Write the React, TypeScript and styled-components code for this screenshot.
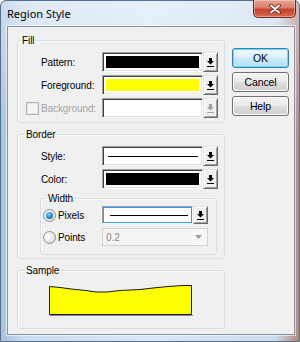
import React from 'react'
import styled, { createGlobalStyle, css } from 'styled-components'

// (1) Global
const GlobalStyle = createGlobalStyle`
  html, body { margin: 0; padding: 0; background: #fff; }
  body { font-family: "Liberation Sans", Arial, sans-serif; }
`

// (2) Frame
const Window = styled.div`
  width: 300px;
  height: 342px;
  box-sizing: border-box;
  padding: 0 4px 6px 6px;
  display: flex;
  flex-direction: column;
  border: 1px solid #56708c;
  border-radius: 6px 6px 0 0;
  background: linear-gradient(180deg, rgba(255, 255, 255, 0.4) 0%, rgba(255, 255, 255, 0) 40%),
    linear-gradient(90deg, #a9c2dc 0%, #cadcf0 8%, #d8e8f7 50%, #cadcef 92%, #b58a7c 100%);
`

const TitleBar = styled.div`
  height: 25px;
  flex-shrink: 0;
  display: flex;
  align-items: flex-start;
  justify-content: space-between;
`

const Title = styled.span`
  font-family: "Noto Sans", "Open Sans", sans-serif;
  font-size: 11px;
  line-height: 13px;
  margin-top: 6px;
  color: #000;
`

const CloseButton = styled.div`
  width: 43px;
  height: 18px;
  margin: -1px -1px 0 0;
  box-sizing: border-box;
  display: flex;
  align-items: center;
  justify-content: center;
  border: 1px solid #6b2a22;
  border-top: none;
  border-radius: 0 0 5px 5px;
  background: linear-gradient(180deg, #e8a495 0%, #dc7d6c 45%, #c6412e 55%, #d66a4f 100%);
  box-shadow: inset 0 0 0 1px rgba(255, 255, 255, 0.35);
`

const Client = styled.div`
  flex: 1;
  min-height: 0;
  overflow: hidden;
  display: flex;
  align-items: flex-start;
  gap: 7px;
  padding: 7px 5px 0 9px;
  background: #f0f0f0;
  border: 1px solid #8193a8;
  box-shadow: 0 0 0 1px rgba(255, 255, 255, 0.6);
  font-size: 10px;
  letter-spacing: -0.1px;
`

// (3) Groups
const LeftColumn = styled.div`
  width: 208px;
  display: flex;
  flex-direction: column;
  gap: 5px;
`

const Group = styled.fieldset<{ $pb: number; $pt?: number }>`
  margin: 0;
  min-width: 0;
  padding: ${(p) => p.$pt ?? 5}px 0 ${(p) => p.$pb}px 0;
  border: 1px solid #d5dfe5;
  border-radius: 3px;
  box-shadow: inset 1px 1px 0 #fcfcfc;
  display: flex;
  flex-direction: column;
  gap: 3px;
`

const SubGroup = styled(Group)`
  margin: 0 7px 0 22px;
  gap: 4px;
`

const Legend = styled.legend<{ $ml: number }>`
  font-size: 10px;
  line-height: 13px;
  padding: 0 1px;
  margin-left: ${(p) => p.$ml}px;
  color: #000;
`

const Row = styled.div<{ $lead: number; $label: number }>`
  display: grid;
  grid-template-columns: ${(p) => p.$lead}px ${(p) => p.$label}px auto;
  align-items: center;
`

const Lead = styled.div`
  justify-self: end;
  margin-right: 2px;
  display: flex;
`

const Label = styled.span<{ $disabled?: boolean }>`
  font-size: 10px;
  line-height: 13px;
  white-space: nowrap;
  color: ${(p) => (p.$disabled ? '#a3a3a3' : '#000')};
`

// (4) Controls
const Combo = styled.div`
  display: flex;
`

const Field = styled.div<{ $w: number; $h: number; $focus?: boolean }>`
  width: ${(p) => p.$w}px;
  height: ${(p) => p.$h}px;
  box-sizing: border-box;
  padding: 2px 3px 2px 2px;
  display: flex;
  align-items: center;
  background: #fff;
  border: 1px solid;
  border-color: #a0a0a0 #fff #fff #a0a0a0;
  ${(p) =>
    p.$focus
      ? css`
          box-shadow: inset 0 0 0 1px #3399ff;
          padding: 2px 3px 2px 4px;
        `
      : css`
          box-shadow: inset 1px 1px 0 #404040, inset -1px -1px 0 #e3e3e3;
        `}
`

const Swatch = styled.div<{ $color: string }>`
  flex: 1;
  height: 12px;
  margin-left: 1px;
  background: ${(p) => p.$color};
`

const LineSample = styled.div`
  flex: 1;
  height: 1px;
  margin: 1px 1px 0 3px;
  background: #000;
`

const DropButton = styled.div<{ $w: number; $h: number }>`
  width: ${(p) => p.$w}px;
  height: ${(p) => p.$h}px;
  box-sizing: border-box;
  display: flex;
  align-items: center;
  justify-content: center;
  background: #f0f0f0;
  border: 1px solid;
  border-color: #e3e3e3 #696969 #696969 #e3e3e3;
  box-shadow: inset 1px 1px 0 #fff, inset -1px -1px 0 #a0a0a0;
`

const DisabledCombo = styled.div`
  width: 106px;
  height: 18px;
  box-sizing: border-box;
  display: flex;
  align-items: center;
  justify-content: space-between;
  padding: 0 5px 0 3px;
  border: 1px solid #d3d3d3;
  background: linear-gradient(90deg, #f4f4f4 0 86%, #f7f7f7 86% 100%);
  font-size: 10px;
  color: #8a8a8a;
`

const Radio = styled.span<{ $checked?: boolean }>`
  position: relative;
  width: 13px;
  height: 13px;
  box-sizing: border-box;
  border-radius: 50%;
  border: 1px solid #8e8f8f;
  background: radial-gradient(circle at 40% 35%, #ffffff 0%, #e9e9e9 55%, #cfcfcf 100%);
  ${(p) =>
    p.$checked &&
    css`
      &::after {
        content: '';
        position: absolute;
        left: 2px;
        top: 2px;
        width: 7px;
        height: 7px;
        border-radius: 50%;
        background: radial-gradient(circle at 40% 35%, #8ad2ff 0%, #2e8ce0 45%, #0c4d93 100%);
      }
    `}
`

const CheckBox = styled.span`
  width: 13px;
  height: 13px;
  box-sizing: border-box;
  border: 1px solid #b1b1b1;
  background: linear-gradient(135deg, #f0f0f0, #fbfbfb);
  box-shadow: inset 0 0 0 1px #e6e6e6;
`

const Sample = styled.svg`
  display: block;
  margin-left: 31px;
`

const RightColumn = styled.div`
  width: 57px;
  margin-top: 14px;
  display: flex;
  flex-direction: column;
  gap: 4px;
`

const Button = styled.div<{ $default?: boolean }>`
  height: 20px;
  box-sizing: border-box;
  display: flex;
  align-items: center;
  justify-content: center;
  font-size: 10.5px;
  color: #000;
  border-radius: 3px;
  border: 1px solid #707070;
  background: linear-gradient(180deg, #f2f2f2 0%, #ebebeb 50%, #dddddd 50%, #cfcfcf 100%);
  box-shadow: inset 0 0 0 1px #fcfcfc;
  ${(p) =>
    p.$default &&
    css`
      border-color: #3c7fb1;
      background: linear-gradient(180deg, #eef8fe 0%, #dff2fc 50%, #c9eafc 50%, #b6e0f7 100%);
      box-shadow: inset 0 0 0 1px #66dcfa;
    `}
`

// (5) Small drawings
const DropGlyph: React.FC<{ disabled?: boolean }> = ({ disabled }) => {
  const c = disabled ? '#a0a0a0' : '#000'
  return (
    <svg width="7" height="9" viewBox="0 0 7 9">
      <rect x="2" y="0" width="3" height="3" fill={c} />
      <polygon points="0,3 7,3 3.5,6.5" fill={c} />
      <rect x="0" y="8" width="7" height="1" fill={c} />
    </svg>
  )
}

const CloseGlyph = () => (
  <svg width="12" height="10" viewBox="0 0 12 10">
    <path d="M2 1.5 L10 8.5 M10 1.5 L2 8.5" stroke="#5a1e16" strokeWidth="3.6" strokeLinecap="round" />
    <path d="M2 1.5 L10 8.5 M10 1.5 L2 8.5" stroke="#fff" strokeWidth="2" strokeLinecap="round" />
  </svg>
)

type ComboProps = {
  w: number
  h: number
  bw?: number
  focus?: boolean
  disabled?: boolean
  children?: React.ReactNode
}

const ComboBox: React.FC<ComboProps> = ({ w, h, bw = 15, focus, disabled, children }) => (
  <Combo>
    <Field $w={w} $h={h} $focus={focus}>
      {children}
    </Field>
    <DropButton $w={bw} $h={h}>
      <DropGlyph disabled={disabled} />
    </DropButton>
  </Combo>
)

const samplePoints =
  '0.5,1.5 11,2.5 22,4 37,5.5 47,7 58,7 71,5.5 91,4.5 104,3 119,1.5 134,0.5 142.5,0.5 142.5,29.5 0.5,29.5'

// (6) Page
const App: React.FC = () => (
  <>
    <GlobalStyle />
    <Window>
      <TitleBar>
        <Title>Region Style</Title>
        <CloseButton>
          <CloseGlyph />
        </CloseButton>
      </TitleBar>
      <Client>
        <LeftColumn>
          <Group $pb={4}>
            <Legend $ml={3}>Fill</Legend>
            <Row $lead={23} $label={61}>
              <span />
              <Label>Pattern:</Label>
              <ComboBox w={101} h={20}>
                <Swatch $color="#000" />
              </ComboBox>
            </Row>
            <Row $lead={23} $label={61}>
              <span />
              <Label>Foreground:</Label>
              <ComboBox w={101} h={20}>
                <Swatch $color="#ffff00" />
              </ComboBox>
            </Row>
            <Row $lead={23} $label={61}>
              <Lead>
                <CheckBox />
              </Lead>
              <Label $disabled>Background:</Label>
              <ComboBox w={101} h={20} disabled />
            </Row>
          </Group>

          <Group $pb={3}>
            <Legend $ml={7}>Border</Legend>
            <Row $lead={23} $label={61}>
              <span />
              <Label>Style:</Label>
              <ComboBox w={101} h={20}>
                <LineSample />
              </ComboBox>
            </Row>
            <Row $lead={23} $label={61}>
              <span />
              <Label>Color:</Label>
              <ComboBox w={101} h={20}>
                <Swatch $color="#000" />
              </ComboBox>
            </Row>
            <SubGroup $pt={1} $pb={8}>
              <Legend $ml={6}>Width</Legend>
              <Row $lead={17} $label={44}>
                <Lead>
                  <Radio $checked />
                </Lead>
                <Label>Pixels</Label>
                <ComboBox w={91} h={18} focus>
                  <LineSample />
                </ComboBox>
              </Row>
              <Row $lead={17} $label={44}>
                <Lead>
                  <Radio />
                </Lead>
                <Label>Points</Label>
                <DisabledCombo>
                  <span>0.2</span>
                  <svg width="7" height="4" viewBox="0 0 7 4">
                    <polygon points="0,0 7,0 3.5,4" fill="#9a9a9a" />
                  </svg>
                </DisabledCombo>
              </Row>
            </SubGroup>
          </Group>

          <Group $pt={8} $pb={12}>
            <Legend $ml={7}>Sample</Legend>
            <Sample width="144" height="31" viewBox="0 0 144 31">
              <polygon points={samplePoints} fill="#ffff00" stroke="#1a1a1a" strokeWidth="1" />
              <line x1="1" y1="30.5" x2="144" y2="30.5" stroke="#8a8a8a" />
            </Sample>
          </Group>
        </LeftColumn>

        <RightColumn>
          <Button $default>OK</Button>
          <Button>Cancel</Button>
          <Button>Help</Button>
        </RightColumn>
      </Client>
    </Window>
  </>
)

export default App
